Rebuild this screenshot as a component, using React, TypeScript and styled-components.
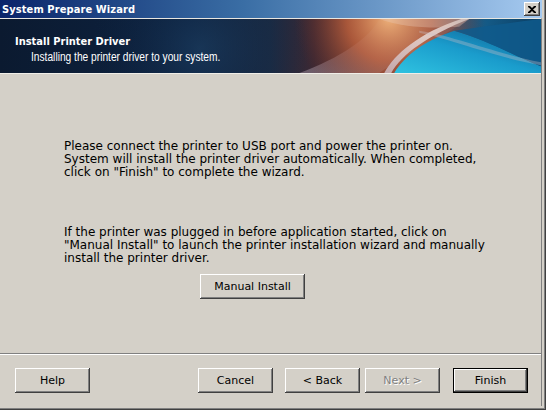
import React from "react";
import styled, { createGlobalStyle, css } from "styled-components";

const UI_FONT = `Tahoma, "DejaVu Sans", Verdana, sans-serif`;
const BOLD_FONT = `Tahoma, "DejaVu Sans Condensed", "DejaVu Sans", sans-serif`;
const FACE = "#d4d0c8";

const GlobalStyle = createGlobalStyle`
  html, body { margin: 0; padding: 0; background: ${FACE}; }
  body { font-family: ${UI_FONT}; font-size: 11px; color: #000; }
  * { box-sizing: border-box; }
`;

const Frame = styled.div`
  width: 546px;
  height: 410px;
  background: ${FACE};
  display: flex;
  flex-direction: column;
  padding: 0 4px 4px 0;
  box-shadow: inset -1px -1px 0 #404040, inset -2px -2px 0 #808080;
  overflow: hidden;
`;

const TitleBar = styled.div`
  height: 18px;
  flex: none;
  display: flex;
  align-items: center;
  justify-content: space-between;
  padding: 0 2px 0 2px;
  background: linear-gradient(90deg, #0a246a 0%, #3a6ea5 45%, #a6caf0 100%);
`;

const TitleText = styled.span`
  font-family: ${BOLD_FONT};
  color: #fff;
  font-weight: bold;
  font-size: 11px;
  letter-spacing: 0.1px;
`;

const CaptionButton = styled.div`
  width: 16px;
  height: 14px;
  background: ${FACE};
  box-shadow: inset -1px -1px 0 #404040, inset 1px 1px 0 #fff,
    inset -2px -2px 0 #808080;
  display: flex;
  align-items: center;
  justify-content: center;
`;

const Client = styled.div`
  flex: 1;
  display: flex;
  flex-direction: column;
  border-top: 1px solid #e8e6e0;
  border-right: 1px solid #808080;
`;

const Banner = styled.div`
  position: relative;
  height: 55px;
  flex: none;
  overflow: hidden;
  border-bottom: 1px solid #f0eee8;
`;

const BannerArt = styled.svg`
  position: absolute;
  inset: 0;
  width: 100%;
  height: 100%;
  display: block;
`;

const BannerText = styled.div`
  position: relative;
  padding: 16px 0 0 15px;
  color: #fff;
`;

const BannerTitle = styled.div`
  font-family: ${BOLD_FONT};
  font-weight: bold;
  font-size: 11px;
  line-height: 13px;
`;

const BannerSub = styled.div`
  font-family: "Liberation Sans", Arial, sans-serif;
  font-size: 12px;
  line-height: 14px;
  margin: 2px 0 0 16px;
  display: inline-block;
  white-space: nowrap;
  transform: scaleX(0.85);
  transform-origin: 0 50%;
`;

const Body = styled.div`
  flex: 1;
  display: flex;
  flex-direction: column;
  padding: 66px 0 0 64px;
`;

const Paragraph = styled.p<{ $gap?: number }>`
  margin: 0 0 ${(p) => p.$gap ?? 0}px 0;
  font-size: 12px;
  line-height: 13px;
  white-space: pre;
`;

const CenterRow = styled.div`
  display: flex;
  padding-left: 136px;
`;

const Separator = styled.div`
  height: 2px;
  flex: none;
  border-top: 1px solid #808080;
  border-bottom: 1px solid #fff;
`;

const Footer = styled.div`
  height: 51px;
  flex: none;
  display: flex;
  align-items: flex-start;
  padding: 13px 0 0 15px;
`;

const Spacer = styled.div<{ $w: number }>`
  width: ${(p) => p.$w}px;
  flex: none;
`;

const Button = styled.button<{ $default?: boolean; $w?: number }>`
  width: ${(p) => p.$w ?? 75}px;
  height: 25px;
  padding: 0;
  margin: 0;
  font-family: ${UI_FONT};
  font-size: 11px;
  color: #000;
  background: ${FACE};
  border: none;
  box-shadow: inset -1px -1px 0 #404040, inset 1px 1px 0 #fff,
    inset -2px -2px 0 #808080;
  ${(p) =>
    p.$default &&
    css`
      border: 1px solid #000;
    `}
  &:disabled {
    color: #808080;
    text-shadow: 1px 1px 0 #fff;
  }
`;

function Art() {
  return (
    <BannerArt viewBox="0 0 542 55" preserveAspectRatio="none">
      <defs>
        <linearGradient id="base" x1="0" y1="0" x2="1" y2="0">
          <stop offset="0" stopColor="#0b1a30" />
          <stop offset="0.35" stopColor="#0d2240" />
          <stop offset="0.5" stopColor="#1a2a42" />
          <stop offset="0.58" stopColor="#3b2833" />
          <stop offset="0.7" stopColor="#7a4238" />
          <stop offset="0.8" stopColor="#5a4f5e" />
          <stop offset="0.9" stopColor="#145a86" />
          <stop offset="1" stopColor="#0b3d62" />
        </linearGradient>
        <radialGradient id="glow" cx="390" cy="0" r="95" gradientUnits="userSpaceOnUse">
          <stop offset="0" stopColor="#f2b47a" stopOpacity="0.95" />
          <stop offset="0.45" stopColor="#c9653c" stopOpacity="0.7" />
          <stop offset="1" stopColor="#6a2a20" stopOpacity="0" />
        </radialGradient>
        <radialGradient id="swirl" cx="200" cy="30" r="110" gradientUnits="userSpaceOnUse">
          <stop offset="0" stopColor="#1f4468" stopOpacity="0.55" />
          <stop offset="1" stopColor="#0d2240" stopOpacity="0" />
        </radialGradient>
        <linearGradient id="cyan" x1="0" y1="1" x2="1" y2="0">
          <stop offset="0" stopColor="#2fc2e0" />
          <stop offset="0.5" stopColor="#1a9ccc" />
          <stop offset="1" stopColor="#0e5688" />
        </linearGradient>
        <linearGradient id="pale" x1="0" y1="1" x2="1" y2="0">
          <stop offset="0" stopColor="#c8b2b8" />
          <stop offset="0.6" stopColor="#e6d4d0" />
          <stop offset="1" stopColor="#ffffff" stopOpacity="0.6" />
        </linearGradient>
        <linearGradient id="mid" x1="0" y1="0" x2="0" y2="1">
          <stop offset="0" stopColor="#7a5f6a" />
          <stop offset="1" stopColor="#9a8a98" />
        </linearGradient>
      </defs>
      <rect x="0" y="0" width="542" height="55" fill="url(#base)" />
      <rect x="0" y="0" width="542" height="55" fill="url(#swirl)" />
      <path d="M300 55 C 340 40, 370 20, 380 0 L 470 0 C 440 20, 400 40, 380 55 Z" fill="url(#mid)" opacity="0.55" />
      <rect x="0" y="0" width="542" height="55" fill="url(#glow)" />
      <path d="M395 55 C 405 38, 425 22, 455 12 C 490 22, 520 40, 542 48 L 542 55 Z" fill="url(#cyan)" />
      <path d="M455 12 C 480 8, 510 4, 542 0 L 542 48 C 520 40, 490 22, 455 12 Z" fill="#0f5b8c" opacity="0.85" />
      <path d="M385 55 C 395 36, 420 14, 462 0 L 470 0 C 430 16, 402 36, 392 55 Z" fill="url(#pale)" opacity="0.9" />
      <path d="M420 12 C 450 16, 500 36, 542 44 L 542 47 C 500 40, 450 20, 420 14 Z" fill="#c8c0c8" opacity="0.35" />
      <path d="M380 0 C 400 8, 430 10, 460 8 L 470 0 Z" fill="#e8c8b8" opacity="0.35" />
    </BannerArt>
  );
}

export default function App() {
  return (
    <>
      <GlobalStyle />
      <Frame>
        <TitleBar>
          <TitleText>System Prepare Wizard</TitleText>
          <CaptionButton>
            <svg width="8" height="7" viewBox="0 0 8 7">
              <path d="M0 0h2l2 2 2-2h2v1L5 3.5 8 6v1H6L4 5 2 7H0V6l3-2.5L0 1z" fill="#000" />
            </svg>
          </CaptionButton>
        </TitleBar>
        <Client>
          <Banner>
            <Art />
            <BannerText>
              <BannerTitle>Install Printer Driver</BannerTitle>
              <BannerSub>Installing the printer driver to your system.</BannerSub>
            </BannerText>
          </Banner>
          <Body>
            <Paragraph $gap={47}>
              {"Please connect the printer to USB port and power the printer on.\nSystem will install the printer driver automatically. When completed,\nclick on \"Finish\" to complete the wizard."}
            </Paragraph>
            <Paragraph $gap={9}>
              {"If the printer was plugged in before application started, click on\n\"Manual Install\" to launch the printer installation wizard and manually\ninstall the printer driver."}
            </Paragraph>
            <CenterRow>
              <Button $w={105}>Manual Install</Button>
            </CenterRow>
          </Body>
          <Separator />
          <Footer>
            <Button>Help</Button>
            <Spacer $w={108} />
            <Button>Cancel</Button>
            <Spacer $w={12} />
            <Button>&lt; Back</Button>
            <Spacer $w={5} />
            <Button disabled>Next &gt;</Button>
            <Spacer $w={13} />
            <Button $default>Finish</Button>
          </Footer>
        </Client>
      </Frame>
    </>
  );
}
